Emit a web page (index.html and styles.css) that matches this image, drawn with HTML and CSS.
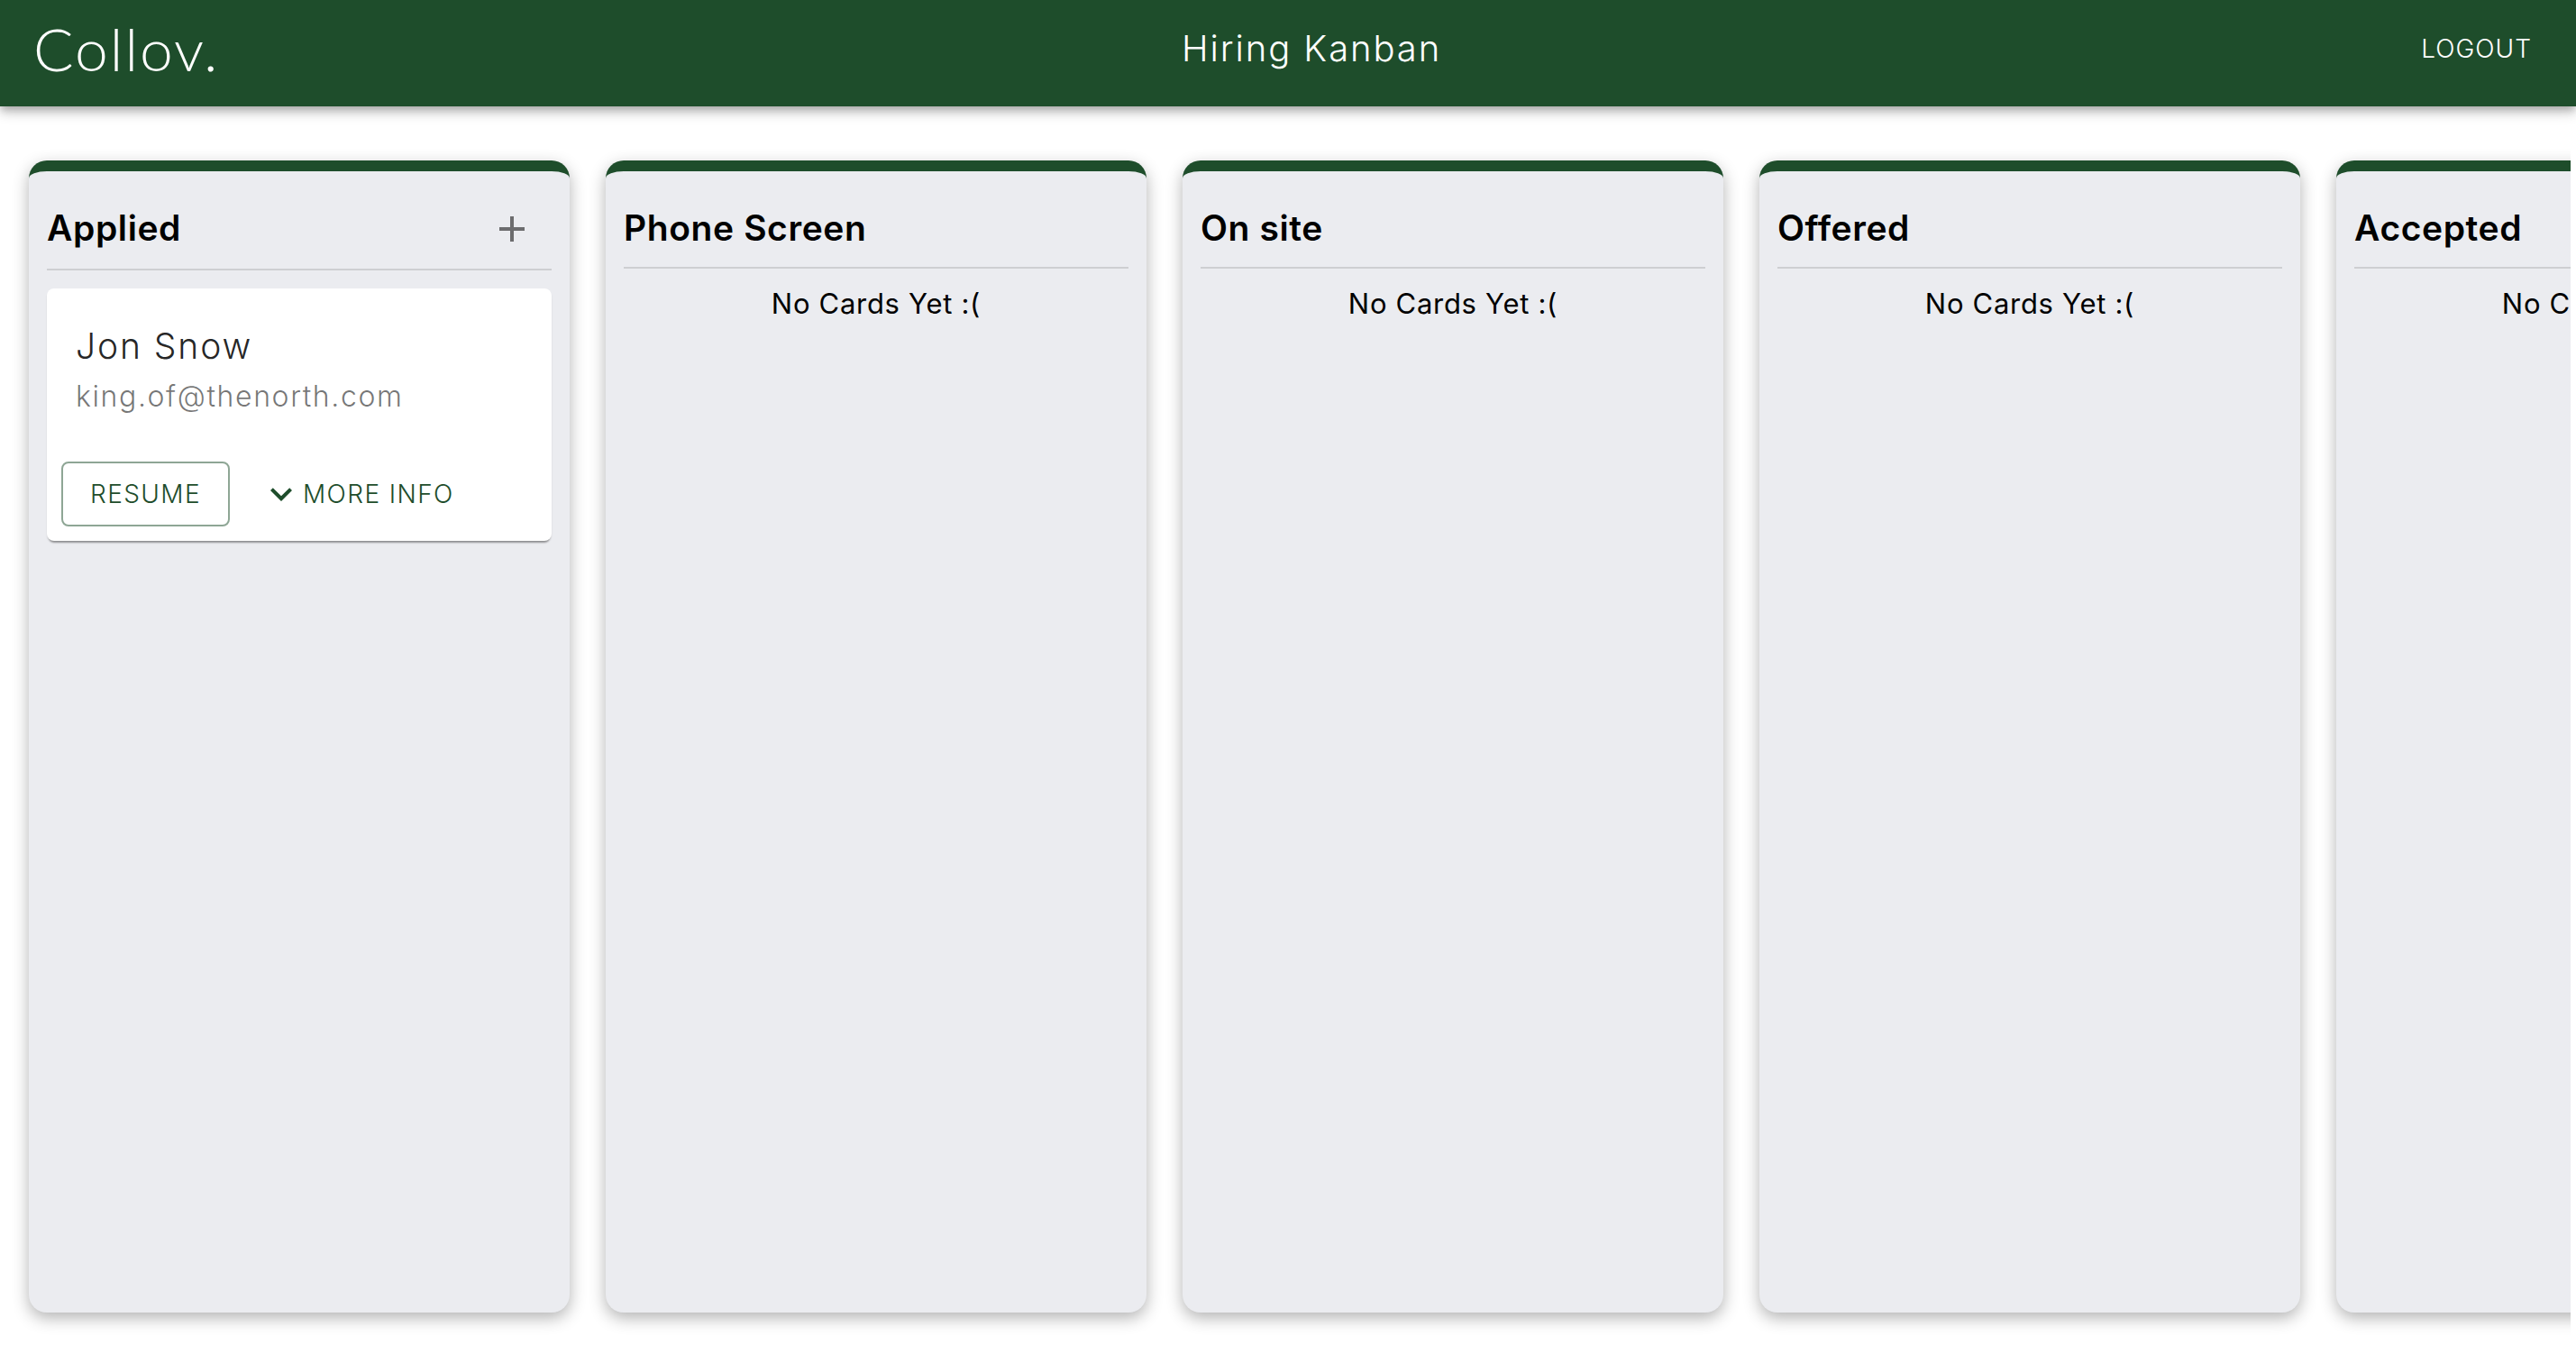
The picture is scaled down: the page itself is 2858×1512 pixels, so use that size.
FILE: index.html
```html
<!DOCTYPE html>
<html lang="en">
<head>
<meta charset="utf-8">
<title>Hiring Kanban</title>
<link rel="stylesheet" href="styles.css">
</head>
<body>
<header class="topbar">
  <div class="logo">Collov.</div>
  <div class="title">Hiring Kanban</div>
  <button class="logout">LOGOUT</button>
</header>
<main class="board">
  <section class="column">
    <div class="column-head">
      <h2 class="column-title">Applied</h2>
      <button class="add" aria-label="Add"><svg class="add-icon" viewBox="0 0 24 24"><path d="M19 13h-6v6h-2v-6H5v-2h6V5h2v6h6v2z"/></svg></button>
    </div>
    <article class="card">
      <div class="card-content">
        <div class="name">Jon Snow</div>
        <div class="email">king.of@thenorth.com</div>
      </div>
      <div class="card-actions">
        <button class="btn-outline">RESUME</button>
        <button class="btn-text"><svg class="chevron" viewBox="4 4 16 16"><path d="M16.59 8.59L12 13.17 7.41 8.59 6 10l6 6 6-6z"/></svg>MORE INFO</button>
      </div>
    </article>
  </section>
  <section class="column">
    <div class="column-head"><h2 class="column-title">Phone Screen</h2></div>
    <p class="empty">No Cards Yet :(</p>
  </section>
  <section class="column">
    <div class="column-head"><h2 class="column-title">On site</h2></div>
    <p class="empty">No Cards Yet :(</p>
  </section>
  <section class="column">
    <div class="column-head"><h2 class="column-title">Offered</h2></div>
    <p class="empty">No Cards Yet :(</p>
  </section>
  <section class="column">
    <div class="column-head"><h2 class="column-title">Accepted</h2></div>
    <p class="empty">No Cards Yet :(</p>
  </section>
</main>
</body>
</html>
```
FILE: styles.css
```css
* { box-sizing: border-box; }
html, body { margin: 0; height: 100%; background: #fff; overflow: hidden; }
body { font-family: "Inter", "Liberation Sans", sans-serif; color: #000; }
button { font-family: inherit; background: none; border: 0; padding: 0; }

.topbar {
  position: relative;
  z-index: 2;
  height: 118px;
  padding: 0 32px 10px;
  display: flex;
  align-items: center;
  justify-content: space-between;
  background: #1e4d2b;
  color: #fff;
  box-shadow: 0 4px 8px -2px rgba(0,0,0,.2), 0 8px 10px rgba(0,0,0,.14), 0 2px 20px rgba(0,0,0,.12);
}
.logo { font-family: "Lato", sans-serif; font-weight: 300; font-size: 66px; line-height: 80px; width: 209px; padding-left: 5px; letter-spacing: 2px; white-space: nowrap; }
.title { font-weight: 300; font-size: 40px; letter-spacing: 1.9px; line-height: 60px; }
.logout { color: #fff; font-weight: 300; font-size: 28px; line-height: 40px; padding: 8px 17px; letter-spacing: 1px; }

.board {
  display: flex;
  gap: 40px;
  margin-right: 6px;
  padding: 60px 0 56px 32px;
  overflow: hidden;
}
.column {
  flex: 0 0 600px;
  height: 1278px;
  padding: 0 20px;
  background: #ebecf0;
  border-top: 12px solid #1e4d2b;
  border-radius: 20px;
  box-shadow: 0 6px 18px rgba(0,0,0,.3);
}
.column-head {
  display: flex;
  align-items: flex-start;
  justify-content: space-between;
  padding: 24px 0 4px;
  border-bottom: 2px solid rgba(0,0,0,.12);
}
.column-title { margin: 0; font-size: 39px; font-weight: 600; line-height: 78px; letter-spacing: .6px; }
.add { width: 88px; height: 80px; display: flex; align-items: center; justify-content: center; }
.add-icon { width: 48px; height: 48px; fill: #6c6c6e; }
.empty { margin: 15px 0 0; text-align: center; font-size: 31px; font-weight: 400; line-height: 48px; letter-spacing: .7px; white-space: nowrap; }

.card {
  margin-top: 20px;
  background: #fff;
  border-radius: 8px;
  box-shadow: 0 4px 2px -2px rgba(0,0,0,.3), 0 2px 3px -1px rgba(0,0,0,.2);
}
.card-content { padding: 32px; }
.name { font-size: 39px; font-weight: 300; line-height: 64px; color: rgba(0,0,0,.87); letter-spacing: 1.9px; }
.email { font-size: 32px; font-weight: 300; line-height: 48px; color: rgba(0,0,0,.54); letter-spacing: 1.6px; }
.card-actions { display: flex; align-items: center; padding: 16px; }
.btn-outline {
  width: 187px;
  height: 72px;
  border: 2px solid rgba(30,77,43,.5);
  border-radius: 8px;
  color: #1e4d2b;
  font-size: 28px;
  font-weight: 300;
  letter-spacing: 1.4px;
}
.btn-text {
  display: flex;
  align-items: center;
  gap: 8px;
  margin-left: 16px;
  padding: 0 25px;
  height: 72px;
  color: #1e4d2b;
  font-size: 28px;
  font-weight: 300;
  letter-spacing: 1.4px;
}
.chevron { width: 32px; height: 32px; fill: #1e4d2b; }
```
